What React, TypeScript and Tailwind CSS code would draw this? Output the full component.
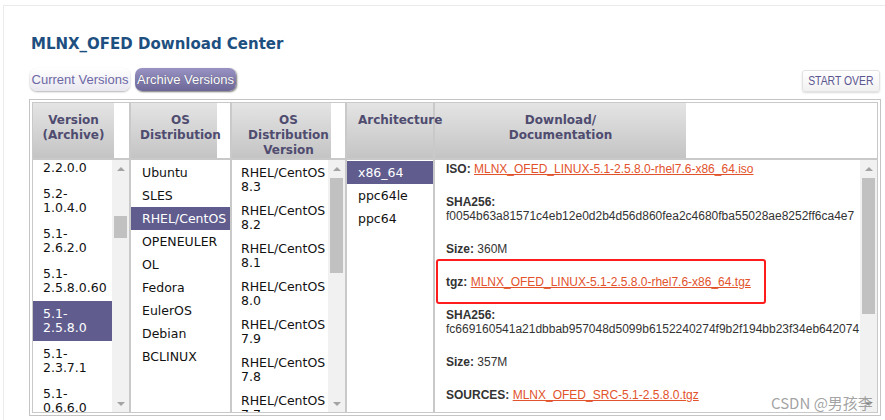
import React from "react";

const versions = [
  ["5.2-", "2.2.0.0"],
  ["5.2-", "1.0.4.0"],
  ["5.1-", "2.6.2.0"],
  ["5.1-", "2.5.8.0.60"],
  ["5.1-", "2.5.8.0"],
  ["5.1-", "2.3.7.1"],
  ["5.1-", "0.6.6.0"],
];

const distros = ["Ubuntu", "SLES", "RHEL/CentOS", "OPENEULER", "OL", "Fedora", "EulerOS", "Debian", "BCLINUX"];
const osVersions = ["8.3", "8.2", "8.1", "8.0", "7.9", "7.8", "7.7"];
const arches = ["x86_64", "ppc64le", "ppc64"];

function Scrollbar({ thumb }: { thumb: string }) {
  return (
    <div className="flex w-[17px] shrink-0 flex-col bg-[#f1f1f1]">
      <div className="flex h-[17px] items-center justify-center">
        <span className="h-0 w-0 border-x-[4px] border-b-[4px] border-x-transparent border-b-[#a3a3a3]" />
      </div>
      <div className="flex-1">
        <div className={`mx-auto w-[13px] bg-[#c1c1c1] ${thumb}`} />
      </div>
      <div className="flex h-[17px] items-center justify-center">
        <span className="h-0 w-0 border-x-[4px] border-t-[4px] border-x-transparent border-t-[#a3a3a3]" />
      </div>
    </div>
  );
}

const cell = "border border-[#c9c9c9]";
const head =
  "border border-[#c9c9c9] bg-[linear-gradient(#e4e4e4,#c4c4c4)] bg-no-repeat pt-[10px] text-[12px] font-bold leading-[15px] text-[#4f4c70]";

export default function App() {
  return (
    <div className="relative h-[420px] w-[885px] overflow-hidden bg-white font-['DejaVu_Sans',Verdana,sans-serif]">
      <div className="ml-[3px] mt-[5px] h-[415px] border-l border-t border-[#ebebeb] pl-[25px]">
        <h1 className="ml-[2px] mt-[29px] text-[15px] font-bold leading-[18px] text-[#1d4f80]">
          MLNX_OFED Download Center
        </h1>

        {/* tabs */}
        <div className="mt-[15px] flex w-[852px] items-start font-['Liberation_Sans',Arial,sans-serif]">
          <button className="ml-[1px] h-[23px] w-[100px] rounded-[7px] bg-[linear-gradient(#ffffff,#e8e7ef)] text-[13px] text-[#6d68a5] shadow-[0_1px_2px_rgba(0,0,0,0.3)]">
            Current Versions
          </button>
          <button className="ml-[5px] h-[23px] w-[101px] rounded-[7px] bg-[linear-gradient(#9893c3,#6c6797)] text-[13px] text-white shadow-[1px_1px_2px_rgba(0,0,0,0.55)] [text-shadow:0_0_1px_rgba(0,0,0,0.4)]">
            Archive Versions
          </button>
          <button className="ml-auto mr-[1px] mt-[2px] flex h-[22px] w-[78px] items-center justify-center whitespace-nowrap rounded-[3px] border border-[#e2e2e2] bg-[linear-gradient(#ffffff,#f1f1f1)] text-[13px] text-[#5b5791] shadow-[0_1px_2px_rgba(0,0,0,0.15)]">
            <span className="inline-block scale-x-[0.8]">START OVER</span>
          </button>
        </div>

        {/* table */}
        <div className="mt-[7px] grid w-[852px] grid-cols-[98px_101px_115px_88px_1fr] grid-rows-[57px_254px] border border-[#c4c4c4] p-[2px]">
          <div className={`${head} bg-[length:81px_100%]`}>
            <div className="w-[81px] text-center">
              Version
              <br />
              (Archive)
            </div>
          </div>
          <div className={`${head} bg-[length:86px_100%] text-center`}>
            OS
            <br />
            Distribution
          </div>
          <div className={`${head} bg-[length:99px_100%] text-center`}>
            OS
            <br />
            Distribution
            <br />
            Version
          </div>
          <div className={`${head} bg-[length:100%_100%] whitespace-nowrap pl-[11px]`}>
            <span className="relative z-10">Architecture</span>
          </div>
          <div className={`${head} bg-[length:251px_100%]`}>
            <div className="w-[251px] text-center">
              Download/
              <br />
              Documentation
            </div>
          </div>

          {/* versions */}
          <div className={`${cell} flex overflow-hidden text-[12.5px] text-[#111]`}>
            <div className="flex-1 overflow-hidden">
              <div className="mt-[-19px]">
                {versions.map(([a, b]) => {
                  const sel = b === "2.5.8.0";
                  return (
                    <div
                      key={b}
                      className={`py-[6px] pl-[10px] leading-[14px] ${sel ? "bg-[#605d8e] text-white" : ""}`}
                    >
                      {a}
                      <br />
                      {b}
                    </div>
                  );
                })}
              </div>
            </div>
            <Scrollbar thumb="mt-[39px] h-[22px]" />
          </div>

          {/* distributions */}
          <div className={`${cell} overflow-hidden pt-[1px] text-[12.5px] text-[#111]`}>
            {distros.map((d) => (
              <div
                key={d}
                className={`h-[23px] whitespace-nowrap pl-[11px] leading-[23px] ${
                  d === "RHEL/CentOS" ? "bg-[#605d8e] text-white" : ""
                }`}
              >
                {d}
              </div>
            ))}
          </div>

          {/* os versions */}
          <div className={`${cell} flex overflow-hidden text-[12.5px] text-[#111]`}>
            <div className="flex-1 overflow-hidden pt-[1px]">
              {osVersions.map((v) => (
                <div key={v} className="whitespace-nowrap py-[5px] pl-[9px] leading-[14px]">
                  RHEL/CentOS
                  <br />
                  {v}
                </div>
              ))}
            </div>
            <Scrollbar thumb="mt-[1px] h-[95px]" />
          </div>

          {/* architecture */}
          <div className={`${cell} overflow-hidden pt-[1px] text-[12.5px] text-[#111]`}>
            {arches.map((a) => (
              <div
                key={a}
                className={`h-[23px] pl-[11px] leading-[23px] ${a === "x86_64" ? "bg-[#605d8e] text-white" : ""}`}
              >
                {a}
              </div>
            ))}
          </div>

          {/* downloads */}
          <div className={`${cell} flex overflow-hidden font-['Liberation_Sans',Arial,sans-serif] text-[12px] text-[#333]`}>
            <div className="flex-1 space-y-[19px] overflow-hidden whitespace-nowrap pl-[11px] pt-[2px] leading-[14px]">
              <div>
                <b>ISO:</b>{" "}
                <a className="text-[#e2522b] underline">MLNX_OFED_LINUX-5.1-2.5.8.0-rhel7.6-x86_64.iso</a>
              </div>
              <div>
                <b>SHA256:</b>
                <br />
                f0054b63a81571c4eb12e0d2b4d56d860fea2c4680fba55028ae8252ff6ca4e7
              </div>
              <div>
                <b>Size:</b> 360M
              </div>
              <div>
                <b>tgz:</b>{" "}
                <a className="text-[#e2522b] underline">MLNX_OFED_LINUX-5.1-2.5.8.0-rhel7.6-x86_64.tgz</a>
              </div>
              <div>
                <b>SHA256:</b>
                <br />
                fc669160541a21dbbab957048d5099b6152240274f9b2f194bb23f34eb642074
              </div>
              <div>
                <b>Size:</b> 357M
              </div>
              <div>
                <b>SOURCES:</b>{" "}
                <a className="text-[#e2522b] underline">MLNX_OFED_SRC-5.1-2.5.8.0.tgz</a>
              </div>
            </div>
            <Scrollbar thumb="mt-[1px] h-[136px]" />
          </div>
        </div>
      </div>

      {/* annotation + watermark */}
      <div className="absolute left-[436px] top-[259px] h-[45px] w-[330px] rounded-[3px] border-2 border-[#ff1c1c]" />
      <div className="absolute left-[771px] top-[394px] font-['Noto_Sans_CJK_SC',sans-serif] text-[15px] leading-[18px] text-[rgba(110,110,110,0.65)]">
        CSDN @男孩李
      </div>
    </div>
  );
}
